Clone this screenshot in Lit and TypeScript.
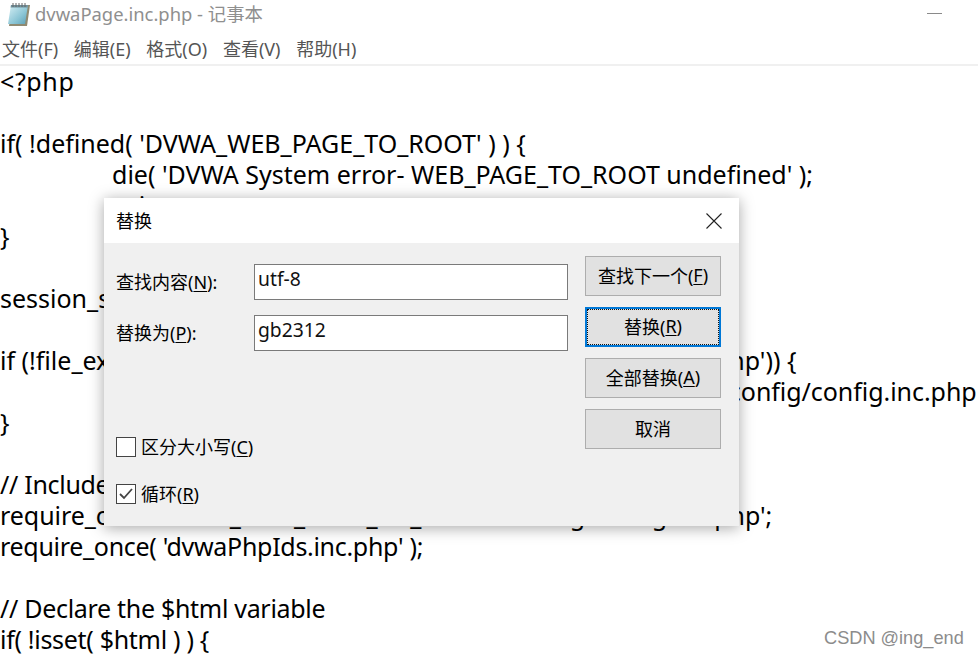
import { LitElement, html, css } from "lit";
import { customElement } from "lit/decorators.js";

const lines: [string, string][] = [
  ["<?php", "wide"],
  ["", ""],
  ["if( !defined( 'DVWA_WEB_PAGE_TO_ROOT' ) ) {", ""],
  ["die( 'DVWA System error- WEB_PAGE_TO_ROOT undefined' );", "ind"],
  ["exit;", "ind"],
  ["}", ""],
  ["", ""],
  ["session_start();", ""],
  ["", ""],
  ["if (!file_exists(DVWA_WEB_PAGE_TO_ROOT . 'config/config.inc.php')) {", ""],
  ["die(\"DVWA System error - config file not found. Copy config/config.inc.php", "ind tight"],
  ["}", ""],
  ["", ""],
  ["// Include configs", "narrow"],
  ["require_once DVWA_WEB_PAGE_TO_ROOT . 'config/config.inc.php';", "tight"],
  ["require_once( 'dvwaPhpIds.inc.php' );", "narrow"],
  ["", ""],
  ["// Declare the $html variable", "narrow"],
  ["if( !isset( $html ) ) {", "narrow"],
];

@customElement("app-root")
export class AppRoot extends LitElement {
  static styles = css`
    :host { display: block; width: 978px; height: 658px; overflow: hidden; position: relative; background: #fff; font-family: "Noto Sans", "Noto Sans CJK SC", sans-serif; }
    .title { height: 28px; padding: 0 36px 0 7px; display: flex; align-items: center; gap: 5px; }
    .title svg { flex: none; }
    .name { flex: 1; color: #8f8f8f; font-size: 18.4px; line-height: 28px; }
    .min { width: 15px; height: 1px; background: #8a8a8a; margin-top: -2px; }
    .menu { height: 32px; padding: 4px 0 0 2px; display: flex; align-items: center; gap: 15.7px; color: #555; font-size: 18px; border-bottom: 2px solid #f0f0f0; box-sizing: content-box; }
    .code { margin: 0; font-size: 25px; line-height: 31px; color: #000; white-space: pre; }
    .line { height: 31px; }
    .ind { padding-left: 112px; }
    .wide { letter-spacing: 0.6px; }
    .narrow { letter-spacing: -0.3px; }
    .tight { letter-spacing: -0.05px; }
    .dialog { position: absolute; left: 104px; top: 198px; width: 635px; height: 328px; background: #f0f0f0; box-shadow: 0 2px 14px rgba(0,0,0,.35); display: flex; flex-direction: column; color: #000; font-size: 18px; }
    .dhead { height: 45px; background: #fff; display: flex; align-items: center; justify-content: space-between; padding: 0 17px 0 12px; flex: none; }
    .dhead span { margin-top: -2px; }
    .dbody { flex: 1; display: grid; grid-template-columns: 1fr 136px; column-gap: 17px; padding: 13px 18px 0 12px; }
    .left { display: flex; flex-direction: column; }
    .frow { display: grid; grid-template-columns: 138px 314px; align-items: center; height: 36px; margin-top: 8px; }
    .frow + .frow { margin-top: 15px; }
    .frow > span { margin-top: -2px; }
    .input { height: 36px; box-sizing: border-box; border: 1px solid #7a7a7a; background: #fff; padding: 0 3px; font-size: 19.3px; line-height: 28px; color: #111; }
    .checks { margin-top: 86px; display: flex; flex-direction: column; gap: 27px; }
    .check { display: flex; align-items: center; gap: 5px; height: 20px; }
    .check > span:last-child { margin-top: -2px; }
    .box { width: 20px; height: 20px; box-sizing: border-box; border: 1px solid #444; background: #fff; display: flex; align-items: center; justify-content: center; flex: none; }
    .btns { display: flex; flex-direction: column; gap: 11px; }
    .btn { height: 40px; box-sizing: border-box; border: 1px solid #adadad; background: #e1e1e1; display: flex; align-items: center; justify-content: center; padding-bottom: 2px; }
    .focus { border: 2px solid #0078d7; outline: 1px dotted #111; outline-offset: -3px; }
    u { text-underline-offset: 2px; text-decoration-thickness: 1px; }
    .mark { position: absolute; left: 824px; top: 628px; font-family: "Liberation Sans", sans-serif; font-size: 18.2px; line-height: 21px; color: #8c8c8c; white-space: nowrap; }
  `;

  render() {
    return html`
      <div class="title">
        <svg width="23" height="24" viewBox="0 0 23 24">
          <defs><linearGradient id="n" x1="0" y1="0" x2="1" y2="1"><stop offset="0" stop-color="#d8f0f5"/><stop offset=".6" stop-color="#8cc6d6"/><stop offset="1" stop-color="#5a9fb6"/></linearGradient></defs>
          <path d="M5 3h18l-3 21H2z" fill="#8f8a72"/>
          <path d="M4 3h17l-3 19H1z" fill="url(#n)"/>
          <path d="M4 3h17l-.4 2.500H3.600z" fill="#6f8f9a"/>
          <path d="M6 1v4M9 1v4M12 1v4M15 1v4M18 1v4" stroke="#666" stroke-width="1"/>
        </svg>
        <div class="name">dvwaPage.inc.php - 记事本</div>
        <div class="min"></div>
      </div>
      <div class="menu"><span>文件(F)</span><span>编辑(E)</span><span>格式(O)</span><span>查看(V)</span><span>帮助(H)</span></div>
      <div class="code">${lines.map(([t, cls]) => html`<div class="line ${cls}">${t}</div>`)}</div>

      <div class="dialog">
        <div class="dhead">
          <span>替换</span>
          <svg width="16" height="16" viewBox="0 0 16 16"><path d="M.5.5l15 15M15.5.5l-15 15" stroke="#222" stroke-width="1.100" fill="none"/></svg>
        </div>
        <div class="dbody">
          <div class="left">
            <div class="frow"><span>查找内容(<u>N</u>):</span><div class="input">utf-8</div></div>
            <div class="frow"><span>替换为(<u>P</u>):</span><div class="input">gb2312</div></div>
            <div class="checks">
              <div class="check"><span class="box"></span><span>区分大小写(<u>C</u>)</span></div>
              <div class="check"><span class="box"><svg width="14" height="12" viewBox="0 0 14 12"><path d="M1 6l4 4 8-9" stroke="#444" stroke-width="1.800" fill="none"/></svg></span><span>循环(<u>R</u>)</span></div>
            </div>
          </div>
          <div class="btns">
            <div class="btn">查找下一个(<u>F</u>)</div>
            <div class="btn focus">替换(<u>R</u>)</div>
            <div class="btn">全部替换(<u>A</u>)</div>
            <div class="btn">取消</div>
          </div>
        </div>
      </div>
      <div class="mark">CSDN @ing_end</div>
    `;
  }
}
